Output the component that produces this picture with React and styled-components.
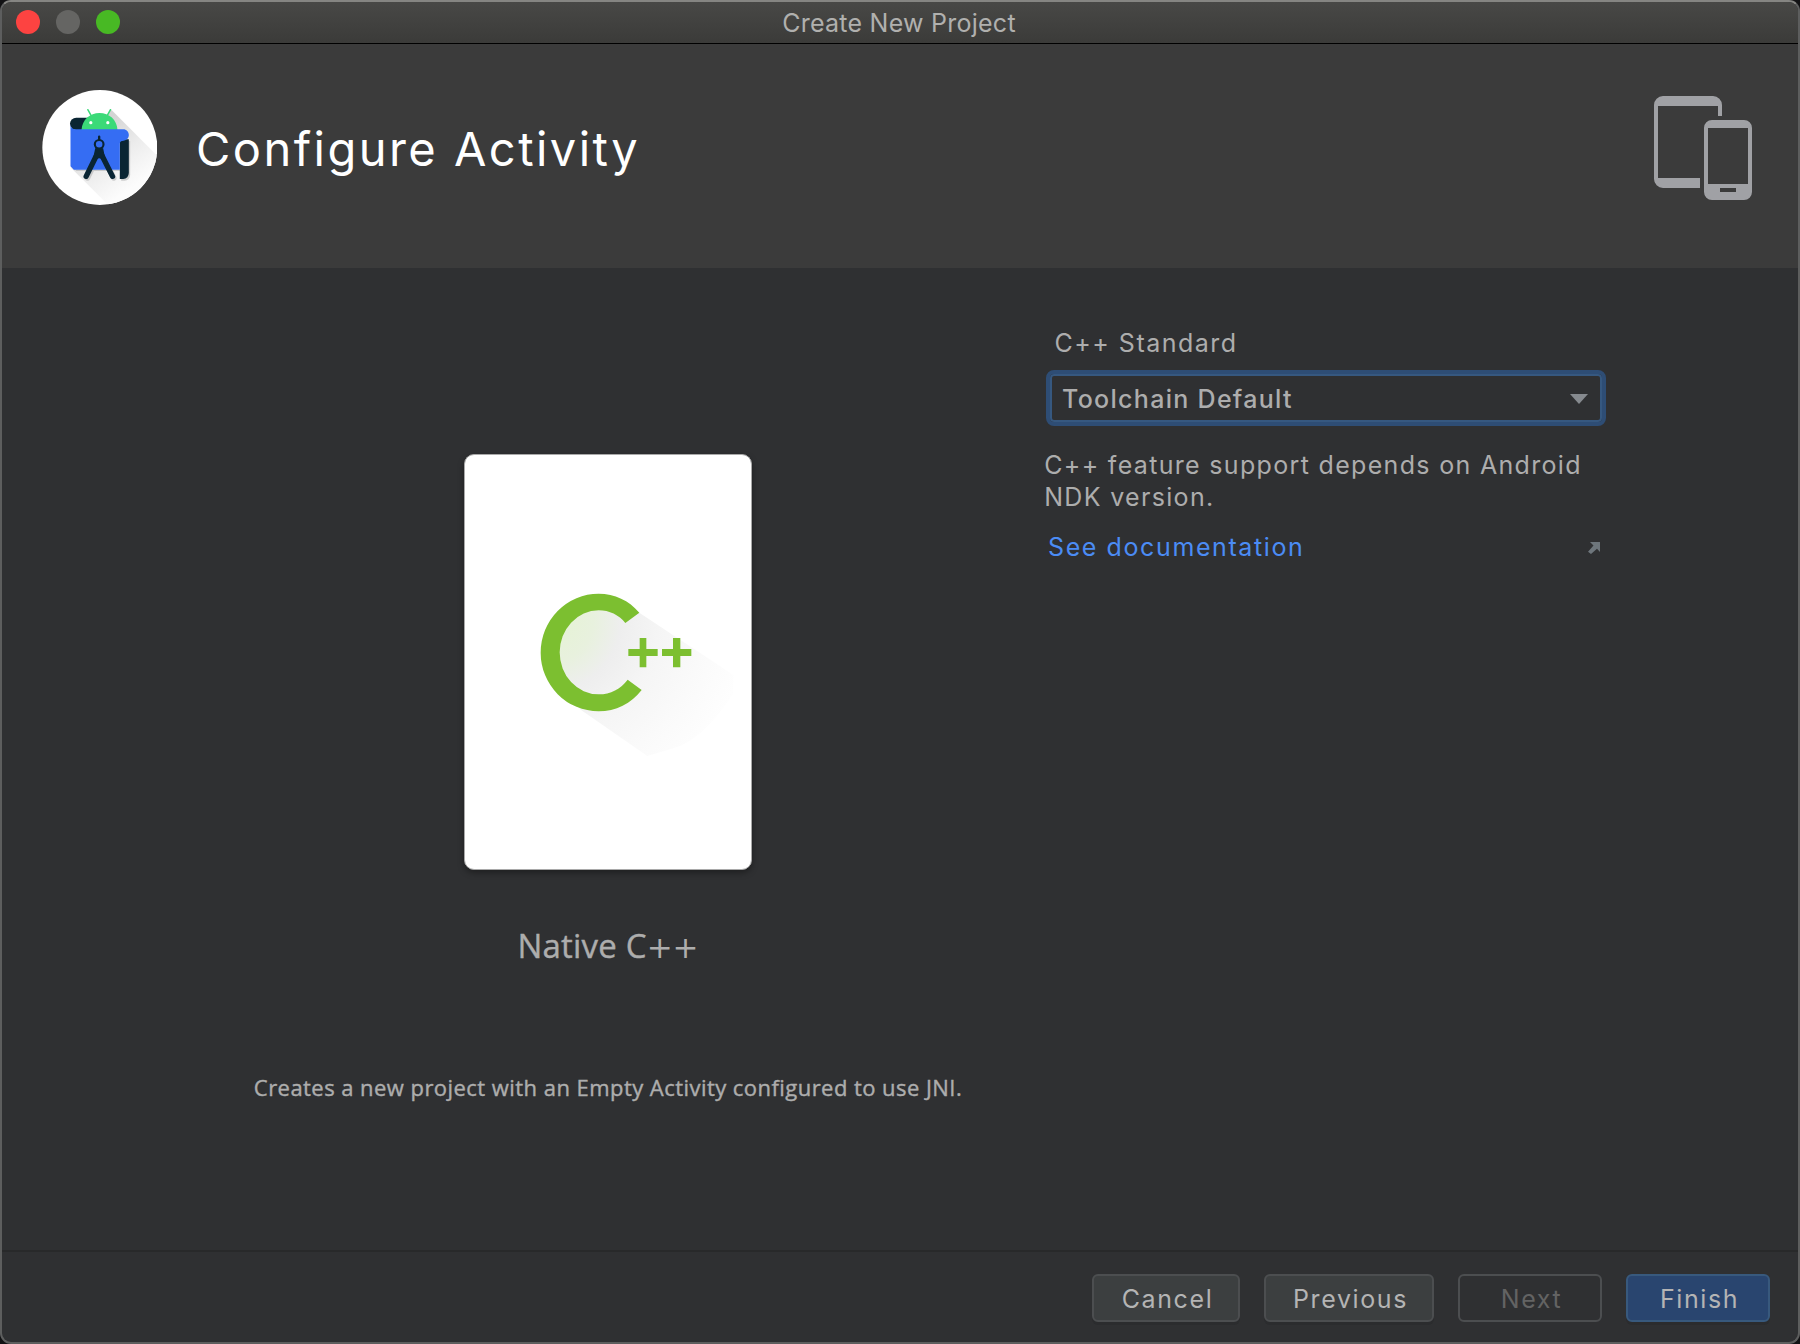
import React from "react";
import styled, { createGlobalStyle, css } from "styled-components";

const GlobalStyle = createGlobalStyle`
  * { box-sizing: border-box; }
  body { margin: 0; background: #121214; overflow: hidden; }
  svg { display: block; flex: none; }
`;

const ui = `"Inter", "Liberation Sans", sans-serif`;
const humanist = `"Open Sans", "Noto Sans", sans-serif`;

const Window = styled.div`
  width: 1800px;
  height: 1344px;
  display: flex;
  flex-direction: column;
  border: 2px solid #5d5e5e;
  border-top-color: #858582;
  border-radius: 11px;
  background: #2f3032;
  color: #adadad;
  font: 400 25px/30px ${ui};
  overflow: hidden;
`;

const TitleBar = styled.header`
  height: 42px;
  flex: none;
  display: grid;
  grid-template-columns: 1fr auto 1fr;
  align-items: center;
  background: linear-gradient(#484846, #3b3b39);
  border-bottom: 1px solid #000;
`;

const Lights = styled.div`
  display: flex;
  gap: 16px;
  padding: 0 0 1px 14px;
`;

const Light = styled.span`
  width: 24px;
  height: 24px;
  border-radius: 50%;
  background: ${(p) => p.$color};
`;

const WindowTitle = styled.div`
  padding: 1px 2px 0 0;
  letter-spacing: 0.25px;
  color: #b0b0ae;
`;

const Banner = styled.section`
  height: 224px;
  flex: none;
  display: flex;
  align-items: flex-start;
  padding: 46px 46px 0 40px;
  background: #3b3b3b;
`;

const Heading = styled.h1`
  margin: 30px 0 0 39px;
  font: 400 47px/57px ${ui};
  letter-spacing: 2.47px;
  color: #fff;
`;

const DeviceSlot = styled.div`
  margin: 6px 0 0 auto;
`;

const Body = styled.main`
  flex: 1;
  min-height: 0;
  display: flex;
`;

const Preview = styled.section`
  width: 1042px;
  padding: 186px 0 0 170px;
  display: flex;
  flex-direction: column;
  align-items: center;
`;

const Card = styled.div`
  width: 288px;
  height: 416px;
  border: 1px solid #a9a9a9;
  border-radius: 10px;
  background: #fff;
  box-shadow: 0 3px 6px rgba(0, 0, 0, 0.35);
  overflow: hidden;
`;

const TemplateName = styled.h2`
  height: 45px;
  margin: 53px 0 0;
  font: 400 33px/45px ${humanist};
  letter-spacing: 0.2px;
  -webkit-text-stroke: 0.4px currentColor;
`;

const Plus = styled.span`
  font: 400 31px/1 "DejaVu Sans", sans-serif;
  letter-spacing: 0;
  -webkit-text-stroke: 0;
`;

const TemplateNote = styled.p`
  margin: 104px 0 0;
  font: 400 22px/30px ${humanist};
  letter-spacing: 0.45px;
  -webkit-text-stroke: 0.4px currentColor;
  white-space: nowrap;
`;

const Form = styled.section`
  width: 562px;
  padding-top: 60px;
`;

const Label = styled.label`
  display: block;
  margin-left: 10.5px;
  letter-spacing: 1.5px;
`;

const Select = styled.div`
  display: flex;
  align-items: center;
  justify-content: space-between;
  height: 56px;
  margin: 12px 0 0 2px;
  padding: 2px 14px 0 12px;
  border: 4px solid #2e4d75;
  border-radius: 8px;
  box-shadow: inset 0 0 0 2px #365880;
  letter-spacing: 1.3px;
  font-weight: 450;
`;

const Hint = styled.p`
  margin: 23px -4px 0 0.2px;
  line-height: 32px;
  letter-spacing: 1.32px;
`;

const LinkRow = styled.div`
  display: flex;
  align-items: center;
  justify-content: space-between;
  margin: 19px 6px 0 4px;
`;

const Link = styled.a`
  color: #4b8cf5;
  letter-spacing: 1.6px;
`;

const ExternalMark = styled.svg`
  margin-top: 2px;
`;

const Footer = styled.footer`
  height: 92px;
  flex: none;
  display: flex;
  justify-content: flex-end;
  gap: 24px;
  padding: 22px 28px 0;
  border-top: 2px solid #28292a;
`;

const variants = {
  normal: css`
    background: #3c3f40;
    border-color: #4c4e50;
    box-shadow: 0 3px 0 #2b2c2e;
  `,
  disabled: css`
    background: transparent;
    border-color: #4c4e50;
    color: #636363;
  `,
  primary: css`
    background: #29456f;
    border-color: #38597d;
    box-shadow: 0 3px 0 #2b2c2e;
  `,
};

const Button = styled.button`
  width: ${(p) => p.$width}px;
  height: 48px;
  padding: 2px 0 0 3px;
  border: 2px solid;
  border-radius: 6px;
  font: 400 25px/30px ${ui};
  letter-spacing: 1.6px;
  color: #b4b4b4;
  ${(p) => variants[p.$variant || "normal"]}
`;

function StudioLogo() {
  return (
    <svg width="115" height="115" viewBox="36.5 30 345 345">
      <defs>
        <clipPath id="disc"><circle cx="210" cy="202.5" r="172.5" /></clipPath>
        <linearGradient id="cast" gradientUnits="userSpaceOnUse" x1="190" y1="150" x2="310" y2="320">
          <stop offset="0" stopColor="#d4d4d4" />
          <stop offset="0.5" stopColor="#ececec" />
          <stop offset="1" stopColor="#fcfcfc" />
        </linearGradient>
      </defs>
      <circle cx="210" cy="202.5" r="172.5" fill="#fff" />
      <path clipPath="url(#disc)" fill="url(#cast)" d="M243 88L400 245V400H260L124 264Z" />
      <g transform="translate(4 5)" opacity=".5">
        <path fill="#a8a8a8" d="M270 178H297V279Q296 296 280 297H270ZM132 264H270V268H136Z" />
        <path fill="none" stroke="#a8a8a8" strokeWidth="16" strokeLinecap="round" strokeLinejoin="round" d="M169 289L208 210L248 289" />
      </g>
      <path fill="#0a2533" d="M139 113H190V150H139A17.500 17.500 0 0 1 139 113Z" />
      <path stroke="#3bda78" strokeWidth="4.500" strokeLinecap="round" d="M174 89L184 107M242 89L232 107" />
      <path fill="#3bda78" d="M155 150C157 119 180 99 209 99S261 119 263 150Z" />
      <circle cx="183" cy="128" r="4.800" fill="#fff" />
      <circle cx="234" cy="128" r="4.800" fill="#fff" />
      <path fill="#0a2533" d="M270 178H297V279Q296 296 280 297H270Z" />
      <path fill="#356df3" d="M122 131C122 143 129 148 140 148H280C290 148 297 156 297 165C297 176 287 182 281 182C276 182 270 184 270 190V269H132L122 259Z" />
      <path stroke="#0a2533" strokeWidth="7" strokeLinecap="round" d="M208 170V182" />
      <path fill="none" stroke="#0a2533" strokeWidth="16" strokeLinecap="round" strokeLinejoin="round" d="M169 289L208 210L248 289" />
      <path fill="#0a2533" d="M196 205H220L228 245L216 238Q208 232 201 238L188 245Z" />
      <circle cx="208" cy="193" r="13" fill="#356df3" stroke="#0a2533" strokeWidth="6.500" />
    </svg>
  );
}

function DevicesIcon() {
  return (
    <svg width="98" height="104" viewBox="0 0 98 104" fill="#a0a1a5" fillRule="evenodd">
      <path d="M9 0H59a9 9 0 0 1 9 9V20H64V10H4V82H46V92H9a9 9 0 0 1-9-9V9a9 9 0 0 1 9-9Z" />
      <path d="M58 24H90a8 8 0 0 1 8 8V96a8 8 0 0 1-8 8H58a8 8 0 0 1-8-8V32a8 8 0 0 1 8-8ZM54 32V88H94V32ZM66 92V96H82V92Z" />
    </svg>
  );
}

function CppLogo() {
  return (
    <svg width="286" height="414" viewBox="45 45 858 1242">
      <defs>
        <radialGradient id="glow" gradientUnits="userSpaceOnUse" cx="300" cy="540" r="590">
          <stop offset="0" stopColor="#e5f3d3" />
          <stop offset="0.22" stopColor="#e8f1de" />
          <stop offset="0.36" stopColor="#eeeeee" />
          <stop offset="0.55" stopColor="#f5f5f5" />
          <stop offset="0.78" stopColor="#fafafa" />
          <stop offset="1" stopColor="#fefefe" />
        </radialGradient>
      </defs>
      <path fill="url(#glow)" d="M568 518L850 705V760Q760 900 670 925L592 948L390 808L300 690V560L446 500Z" />
      <path fill="#7cbf30" d="M568 518C537 481 494 461 446 461A174 177 0 0 0 272 638A174 176 0 0 0 446 814C497 814 544 791 575 750L533 719C512 747 482 763 446 763A117 126 0 0 1 329 637A117 126 0 0 1 446 511C478 511 507 525 526 549Z" />
      <path fill="#7cbf30" d="M569 594H589V627H623V648H589V682H569V648H535V627H569ZM669 594H691V627H724V648H691V682H669V648H636V627H669Z" />
    </svg>
  );
}

export default function App() {
  return (
    <>
      <GlobalStyle />
      <Window>
        <TitleBar>
          <Lights>
            <Light $color="#fd4341" />
            <Light $color="#656563" />
            <Light $color="#48b924" />
          </Lights>
          <WindowTitle>Create New Project</WindowTitle>
        </TitleBar>
        <Banner>
          <StudioLogo />
          <Heading>Configure Activity</Heading>
          <DeviceSlot><DevicesIcon /></DeviceSlot>
        </Banner>
        <Body>
          <Preview>
            <Card><CppLogo /></Card>
            <TemplateName>Native C<Plus>++</Plus></TemplateName>
            <TemplateNote>Creates a new project with an Empty Activity configured to use JNI.</TemplateNote>
          </Preview>
          <Form>
            <Label>C++ Standard</Label>
            <Select>
              <span>Toolchain Default</span>
              <svg width="18" height="10" viewBox="0 0 18 10"><path fill="#868a8f" d="M0 0H18L9 10Z" /></svg>
            </Select>
            <Hint>C++ feature support depends on Android NDK version.</Hint>
            <LinkRow>
              <Link>See documentation</Link>
              <ExternalMark width="12" height="12" viewBox="0 0 12 12">
                <path fill="#6e767c" d="M2 0H12V10L9 6.800L3 12L0 9.800L5.500 3.500Z" />
              </ExternalMark>
            </LinkRow>
          </Form>
        </Body>
        <Footer>
          <Button $width={148}>Cancel</Button>
          <Button $width={170}>Previous</Button>
          <Button $width={144} $variant="disabled">Next</Button>
          <Button $width={144} $variant="primary">Finish</Button>
        </Footer>
      </Window>
    </>
  );
}
